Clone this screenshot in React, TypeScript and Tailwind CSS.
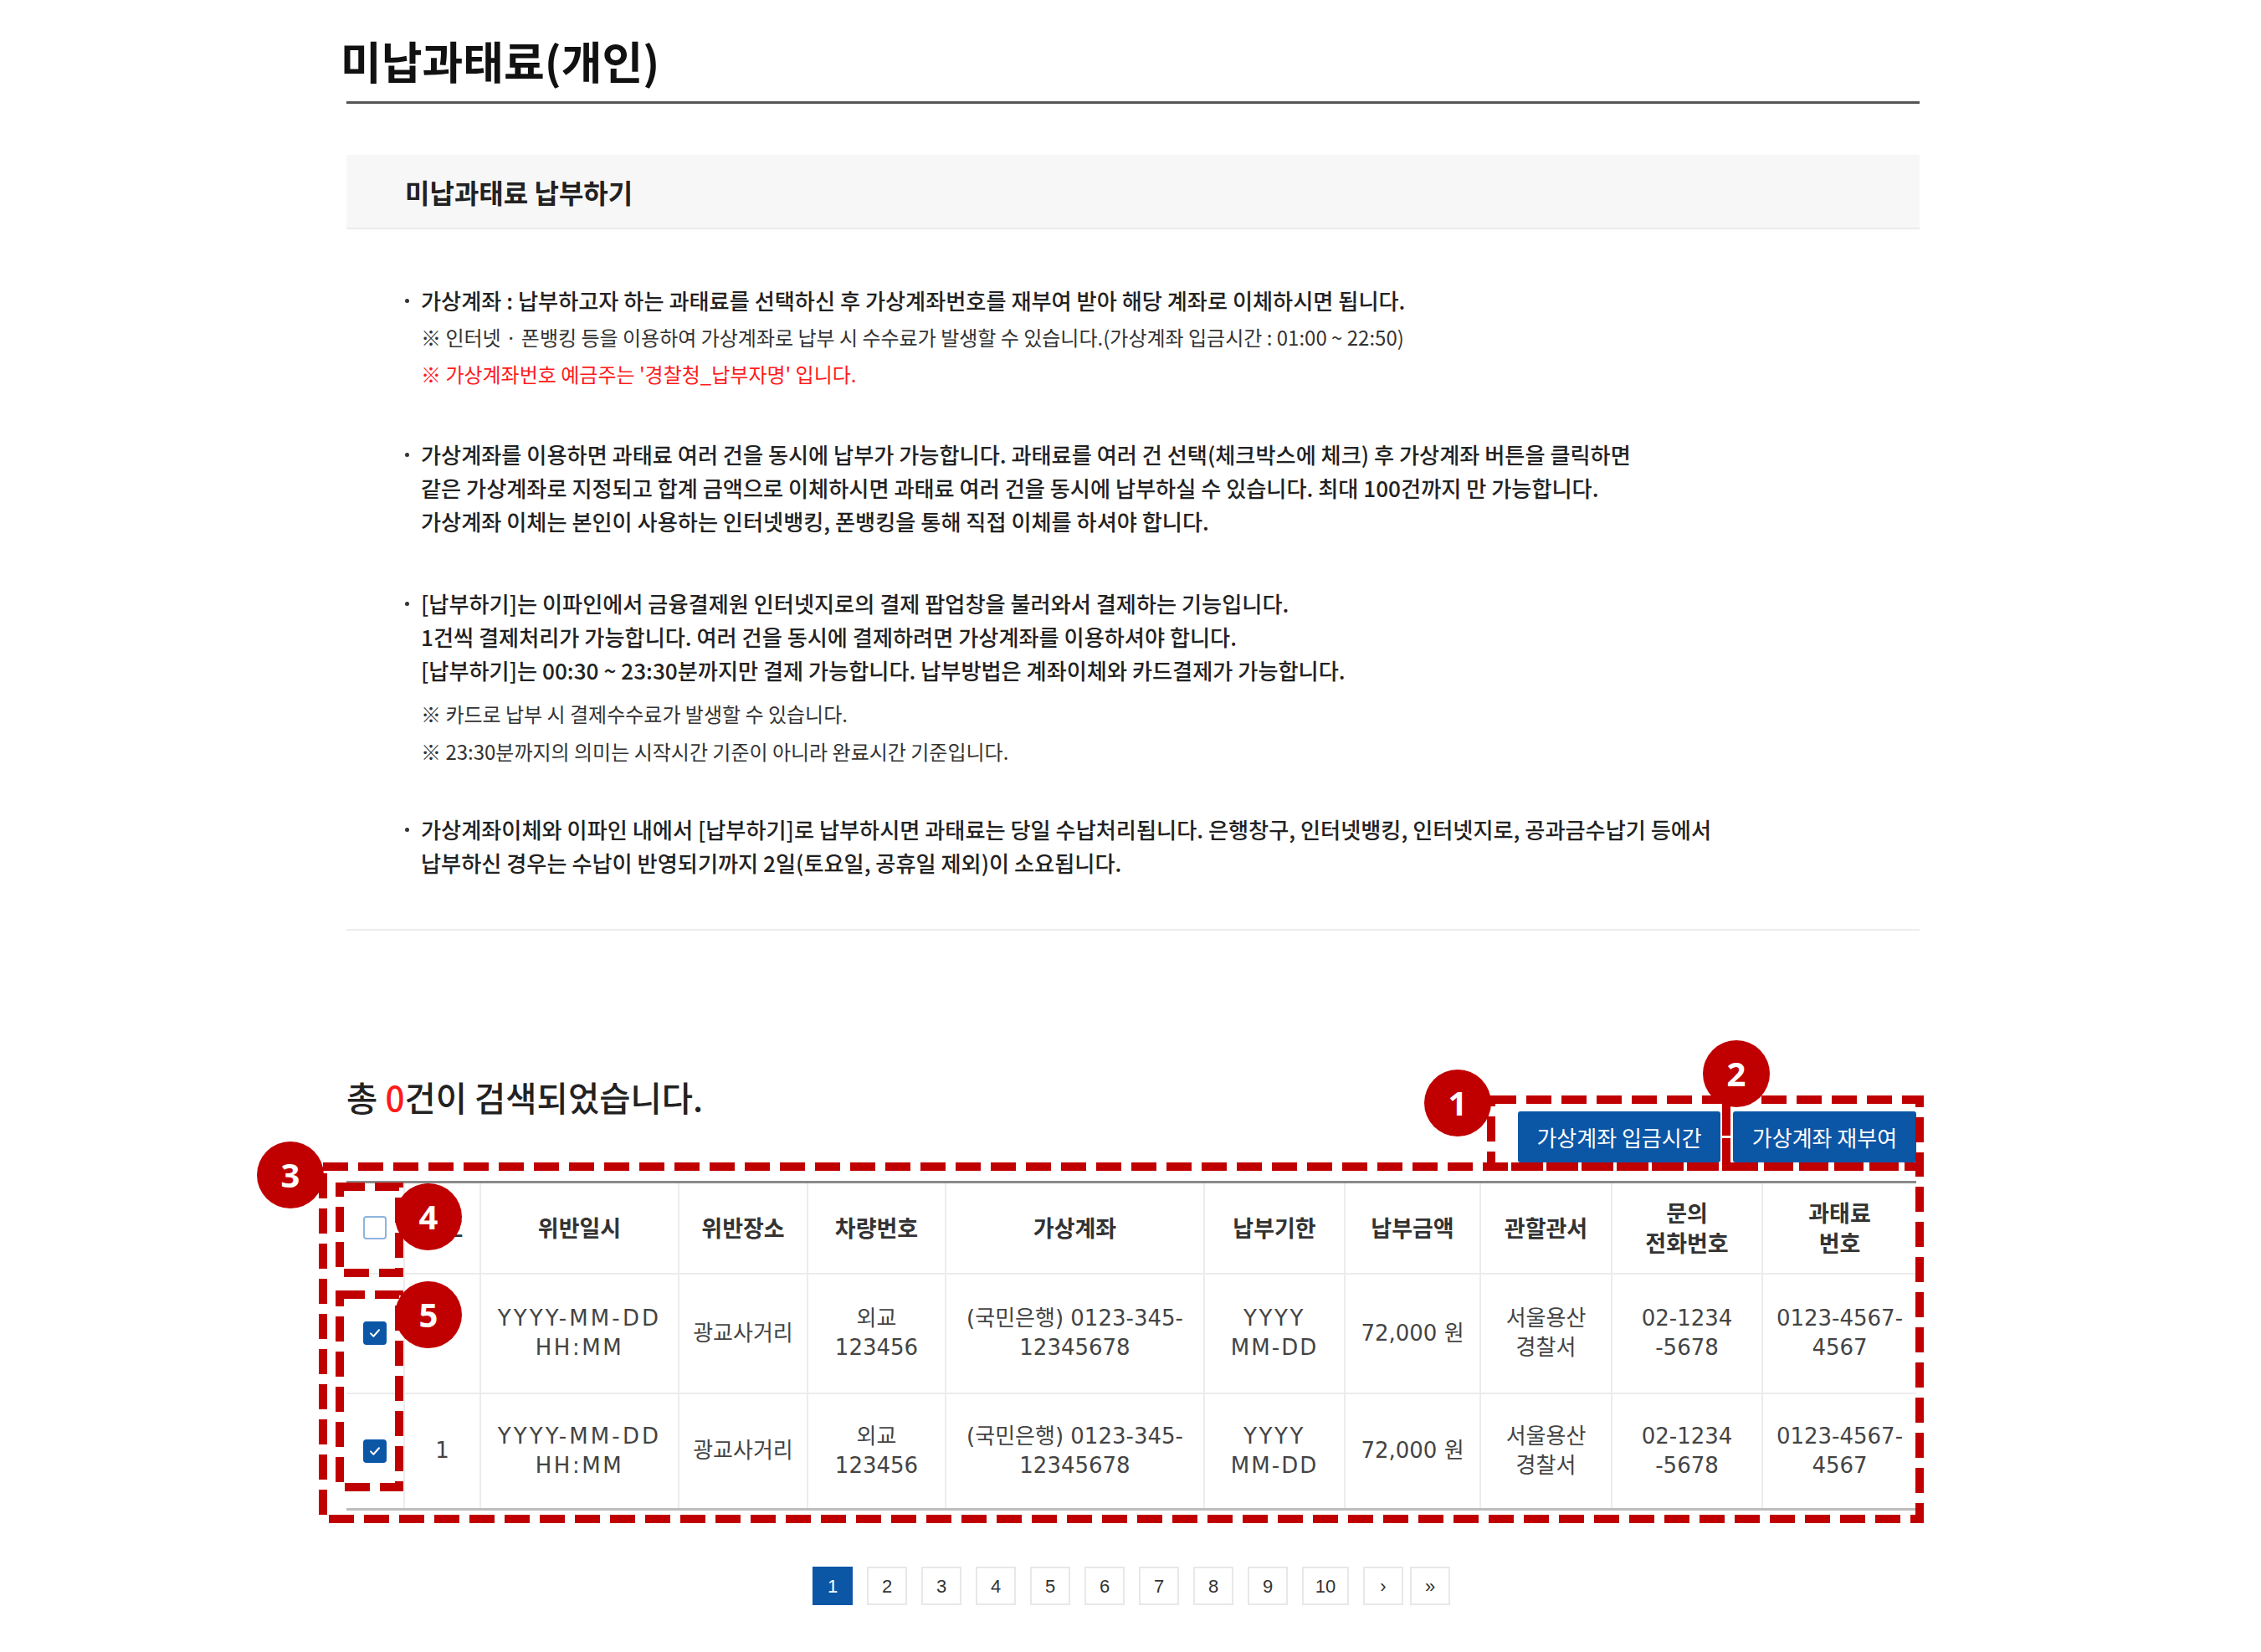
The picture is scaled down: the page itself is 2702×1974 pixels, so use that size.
import React from 'react'

const red = '#c00000'

function DashBox({ className }: { className: string }) {
  return (
    <svg className={`pointer-events-none absolute z-10 overflow-visible ${className}`}>
      <rect x="0" y="0" width="100%" height="100%" fill="none" stroke={red} strokeWidth="10" strokeDasharray="30 12" />
    </svg>
  )
}

function Badge({ n, className }: { n: number; className: string }) {
  return (
    <div
      className={`absolute z-20 flex h-[80px] w-[80px] items-center justify-center rounded-full bg-[#c00000] font-['Noto_Sans',sans-serif] text-[40px] font-bold text-white ${className}`}
    >
      {n}
    </div>
  )
}

// bullet dot, sits on the first line of the item
function Dot({ h }: { h: string }) {
  return (
    <span className={`flex w-[19px] shrink-0 items-center ${h}`}>
      <span className="h-[5px] w-[5px] rounded-full bg-[#333]" />
    </span>
  )
}

function Check({ checked }: { checked?: boolean }) {
  if (!checked) {
    return <span className="mx-auto block h-[28px] w-[28px] rounded-[4px] border-2 border-[#8db3dd] bg-white" />
  }
  return (
    <span className="mx-auto flex h-[28px] w-[28px] items-center justify-center rounded-[4px] bg-[#0c56a6]">
      <svg viewBox="0 0 24 24" className="h-[20px] w-[20px]" fill="none" stroke="white" strokeWidth="2.4" strokeLinecap="round" strokeLinejoin="round">
        <path d="M6 12.5l4 4 8-9" />
      </svg>
    </span>
  )
}

const rows = [
  { no: '2', h: 'h-[143px] border-b-2 border-[#ececec]' },
  { no: '1', h: 'h-[139px]' },
]

const pages = ['1', '2', '3', '4', '5', '6', '7', '8', '9', '10']

const td = 'border-l-2 border-[#ececec]'
const th = 'border-l-2 border-[#ececec] font-bold'

export default function App() {
  return (
    <div className="min-h-screen bg-white font-['Noto_Sans_CJK_KR',sans-serif] text-[#222]">
      <div className="ml-[414px] w-[1880px] pb-[40px] pt-[46px]">
        <h1 className="-ml-[7px] text-[53px] font-bold leading-none text-[#111]">미납과태료(개인)</h1>
        <div className="mt-[22px] h-[3px] bg-[#555]" />

        <div className="mt-[61px] flex h-[89px] items-center border-b-2 border-[#ebebeb] bg-[#f7f7f7] pl-[70px]">
          <h2 className="text-[32px] font-bold text-[#222]">미납과태료 납부하기</h2>
        </div>

        <div className="mt-[63px] pl-[70px] text-[26.2px] font-medium">
          <div>
            <div className="flex leading-[44px]">
              <Dot h="h-[44px]" />
              <p>가상계좌 : 납부하고자 하는 과태료를 선택하신 후 가상계좌번호를 재부여 받아 해당 계좌로 이체하시면 됩니다.</p>
            </div>
            <p className="pl-[19px] text-[24px] font-normal leading-[44px] text-[#333]">
              ※ 인터넷 · 폰뱅킹 등을 이용하여 가상계좌로 납부 시 수수료가 발생할 수 있습니다.(가상계좌 입금시간 : 01:00 ~ 22:50)
            </p>
            <p className="pl-[19px] text-[24px] font-normal leading-[44px] text-[#ff1a1a]">
              ※ 가상계좌번호 예금주는 '경찰청_납부자명' 입니다.
            </p>
          </div>

          <div className="mt-[54px] flex leading-[40px]">
            <Dot h="h-[40px]" />
            <p>
              가상계좌를 이용하면 과태료 여러 건을 동시에 납부가 가능합니다. 과태료를 여러 건 선택(체크박스에 체크) 후 가상계좌 버튼을 클릭하면
              <br />
              같은 가상계좌로 지정되고 합계 금액으로 이체하시면 과태료 여러 건을 동시에 납부하실 수 있습니다. 최대 100건까지 만 가능합니다.
              <br />
              가상계좌 이체는 본인이 사용하는 인터넷뱅킹, 폰뱅킹을 통해 직접 이체를 하셔야 합니다.
            </p>
          </div>

          <div className="mt-[58px]">
            <div className="flex leading-[40px]">
              <Dot h="h-[40px]" />
              <p>
                [납부하기]는 이파인에서 금융결제원 인터넷지로의 결제 팝업창을 불러와서 결제하는 기능입니다.
                <br />
                1건씩 결제처리가 가능합니다. 여러 건을 동시에 결제하려면 가상계좌를 이용하셔야 합니다.
                <br />
                [납부하기]는 00:30 ~ 23:30분까지만 결제 가능합니다. 납부방법은 계좌이체와 카드결제가 가능합니다.
              </p>
            </div>
            <div className="mt-[9px] pl-[19px] text-[24px] font-normal leading-[45px] text-[#333]">
              <p>※ 카드로 납부 시 결제수수료가 발생할 수 있습니다.</p>
              <p>※ 23:30분까지의 의미는 시작시간 기준이 아니라 완료시간 기준입니다.</p>
            </div>
          </div>

          <div className="mt-[51px] flex leading-[40px]">
            <Dot h="h-[40px]" />
            <p>
              가상계좌이체와 이파인 내에서 [납부하기]로 납부하시면 과태료는 당일 수납처리됩니다. 은행창구, 인터넷뱅킹, 인터넷지로, 공과금수납기 등에서
              <br />
              납부하신 경우는 수납이 반영되기까지 2일(토요일, 공휴일 제외)이 소요됩니다.
            </p>
          </div>
        </div>

        <div className="mt-[59px] h-[2px] bg-[#ececec]" />

        <section className="relative mt-[171px] w-[1876px]">
          <div className="flex items-start justify-between">
            <p className="text-[40.5px] font-medium leading-[56px] text-[#222]">
              총 <span className="text-[#ff1a1a]">0</span>건이 검색되었습니다.
            </p>
            <div className="mt-[45px] flex gap-[15px]">
              <button className="h-[61px] w-[242px] rounded-[3px] bg-[#0c56a6] text-[26px] text-white">가상계좌 입금시간</button>
              <button className="h-[61px] w-[219px] rounded-[3px] bg-[#0c56a6] text-[26px] text-white">가상계좌 재부여</button>
            </div>
          </div>

          <table className="mt-[22px] w-[1876px] table-fixed border-collapse border-y-[3px] border-t-[#8a8a8a] border-b-[#bdbdbd] text-center">
            <colgroup>
              <col className="w-[69px]" />
              <col className="w-[91px]" />
              <col className="w-[237px]" />
              <col className="w-[154px]" />
              <col className="w-[165px]" />
              <col className="w-[309px]" />
              <col className="w-[168px]" />
              <col className="w-[162px]" />
              <col className="w-[157px]" />
              <col className="w-[180px]" />
              <col className="w-[184px]" />
            </colgroup>
            <thead>
              <tr className="h-[109px] border-b-2 border-[#ececec] text-[27px] leading-[36px] text-[#333]">
                <th className="font-bold">
                  <Check />
                </th>
                <th className={th}>번호</th>
                <th className={th}>위반일시</th>
                <th className={th}>위반장소</th>
                <th className={th}>차량번호</th>
                <th className={th}>가상계좌</th>
                <th className={th}>납부기한</th>
                <th className={th}>납부금액</th>
                <th className={th}>관할관서</th>
                <th className={th}>
                  문의
                  <br />
                  전화번호
                </th>
                <th className={th}>
                  과태료
                  <br />
                  번호
                </th>
              </tr>
            </thead>
            <tbody className="font-['DejaVu_Sans','Noto_Sans_CJK_KR',sans-serif] text-[26px] leading-[35px] text-[#444]">
              {rows.map((r) => (
                <tr key={r.no} className={r.h}>
                  <td>
                    <Check checked />
                  </td>
                  <td className={td}>{r.no}</td>
                  <td className={td}>
                    <span className="tracking-[0.12em]">YYYY-MM-DD</span>
                    <br />
                    <span className="tracking-[0.1em]">HH:MM</span>
                  </td>
                  <td className={td}>광교사거리</td>
                  <td className={td}>
                    외교
                    <br />
                    123456
                  </td>
                  <td className={td}>
                    (국민은행) 0123-345-
                    <br />
                    12345678
                  </td>
                  <td className={td}>
                    <span className="tracking-[0.1em]">YYYY</span>
                    <br />
                    <span className="tracking-[0.08em]">MM-DD</span>
                  </td>
                  <td className={td}>72,000 원</td>
                  <td className={td}>
                    서울용산
                    <br />
                    경찰서
                  </td>
                  <td className={td}>
                    02-1234
                    <br />
                    -5678
                  </td>
                  <td className={td}>
                    0123-4567-
                    <br />
                    4567
                  </td>
                </tr>
              ))}
            </tbody>
          </table>

          <nav className="mt-[67px] flex justify-center font-['Liberation_Sans',sans-serif] text-[22px] text-[#333]">
            <div className="flex gap-[17px]">
              {pages.map((p) => (
                <a
                  key={p}
                  className={`flex h-[46px] items-center justify-center border-2 ${p === '10' ? 'w-[56px]' : 'w-[48px]'} ${
                    p === '1' ? 'border-[#0c56a6] bg-[#0c56a6] text-white' : 'border-[#e8e8e8] bg-white'
                  }`}
                >
                  {p}
                </a>
              ))}
              <div className="flex gap-[8px]">
                <a className="flex h-[46px] w-[48px] items-center justify-center border-2 border-[#e8e8e8]">›</a>
                <a className="flex h-[46px] w-[48px] items-center justify-center border-2 border-[#e8e8e8]">»</a>
              </div>
            </div>
          </nav>

          <DashBox className="left-[1368px] top-[31px] h-[80px] w-[281px]" />
          <DashBox className="left-[1649px] top-[31px] h-[80px] w-[231px]" />
          <DashBox className="-left-[28px] top-[111px] h-[421px] w-[1908px]" />
          <DashBox className="-left-[8px] top-[135px] h-[103px] w-[71px]" />
          <DashBox className="-left-[8px] top-[264px] h-[230px] w-[71px]" />

          <Badge n={1} className="left-[1288px] -top-[5px]" />
          <Badge n={2} className="left-[1621px] -top-[40px]" />
          <Badge n={3} className="-left-[107px] top-[81px]" />
          <Badge n={4} className="left-[58px] top-[131px]" />
          <Badge n={5} className="left-[58px] top-[248px]" />
        </section>
      </div>
    </div>
  )
}
